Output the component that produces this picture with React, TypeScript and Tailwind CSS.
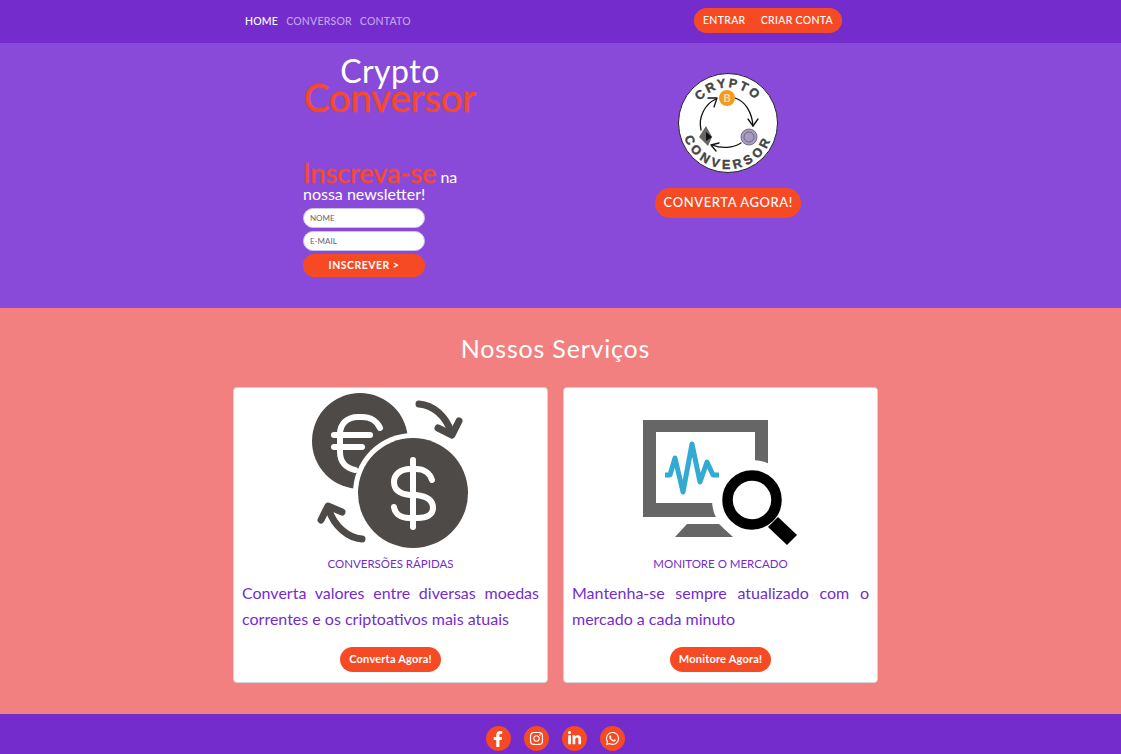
import { FaFacebookF, FaInstagram, FaLinkedinIn, FaWhatsapp } from 'react-icons/fa'

function LogoBadge() {
  return (
    <svg width="100" height="100" viewBox="0 0 100 100" className="block">
      <circle cx="50" cy="50" r="49.5" fill="#fff" stroke="#222" strokeWidth="1" />
      <defs>
        <path id="logoTop" d="M 14.5 50 A 35.5 35.5 0 0 1 85.5 50" />
        <path id="logoBottom" d="M 4 50 A 46 46 0 0 0 96 50" />
      </defs>
      <text fontFamily="'Liberation Sans', sans-serif" fontWeight="700" fontSize="12.5" fill="#444" stroke="#444" strokeWidth="0.4" letterSpacing="2.2" textAnchor="middle">
        <textPath href="#logoTop" startOffset="50%">CRYPTO</textPath>
      </text>
      <text fontFamily="'Liberation Sans', sans-serif" fontWeight="700" fontSize="12.5" fill="#444" stroke="#444" strokeWidth="0.4" letterSpacing="3.8" textAnchor="middle">
        <textPath href="#logoBottom" startOffset="50%">CONVERSOR</textPath>
      </text>
      <g fill="none" stroke="#111" strokeWidth="1.3" strokeLinecap="round" strokeLinejoin="round">
        <path d="M 57 25 C 67 28 74 39 75 53" />
        <path d="M 70 46 L 75 53 L 80 46" />
        <path d="M 63 70 C 55 75 44 76 34 72" />
        <path d="M 41 70 L 33 72 L 38 78" />
        <path d="M 23 57 C 20 44 27 31 38 26" />
        <path d="M 30 25 L 39 25 L 36 34" />
      </g>
      <circle cx="49" cy="25" r="8" fill="#f39a1f" />
      <text x="49" y="29" textAnchor="middle" fontFamily="'Liberation Sans', sans-serif" fontWeight="700" fontSize="10" fill="#f8dcae">B</text>
      <circle cx="71" cy="64" r="8" fill="#a79cc0" stroke="#77708c" strokeWidth="1" />
      <circle cx="71" cy="64" r="5" fill="none" stroke="#6f6788" strokeWidth="1" />
      <polygon points="28,53 34,64 30,73 21,64" fill="#666" />
      <polygon points="28,59 34,64 28,68" fill="#111" />
    </svg>
  )
}

function CoinsIcon() {
  return (
    <svg width="164" height="162" viewBox="1 0 164 162" className="block">
      <circle cx="52" cy="51" r="48" fill="#4d4a48" />
      <g fill="none" stroke="#fff" strokeWidth="6" strokeLinecap="round">
        <path d="M 72 38 C 69 31 62 27 54 27 H 50 C 39 27 32 34 32 44 V 62 C 32 72 38 78 47 80" />
        <path d="M 26 45 H 62" />
        <path d="M 26 57 H 54" />
      </g>
      <circle cx="105" cy="103" r="60" fill="#fff" />
      <circle cx="105" cy="103" r="55" fill="#4d4a48" />
      <g fill="none" stroke="#fff" strokeWidth="6" strokeLinecap="round">
        <path d="M 105 70 V 137" />
        <path d="M 124 90 C 122 83 116 79 108 79 H 102 C 92 79 86 85 86 92 C 86 100 92 104 102 105 H 108 C 118 106 125 110 125 118 C 125 125 118 128 110 128 H 101 C 93 128 87 124 86 117" />
      </g>
      <g fill="none" stroke="#4d4a48" strokeWidth="7" strokeLinecap="round" strokeLinejoin="round">
        <path d="M 111 14 C 125 15 138 26 143 42" />
        <path d="M 130 38 L 144 45 L 151 31" />
        <path d="M 54 149 C 40 148 26 136 21 120" />
        <path d="M 13 130 L 20 116 L 34 122" />
      </g>
    </svg>
  )
}

function MonitorIcon() {
  return (
    <svg width="160" height="130" viewBox="1 0 160 130" className="block">
      <path fillRule="evenodd" d="M 3 2 H 128 V 99 H 3 Z M 16 14 V 85 H 115 V 14 Z" fill="#666" />
      <polygon points="47,106 79,106 93,119 35,119" fill="#666" />
      <polyline
        points="25,57 30,57 35,40 43,74 52,26 60,64 67,44 73,57 79,57"
        fill="none"
        stroke="#33aad2"
        strokeWidth="5"
        strokeLinejoin="round"
      />
      <circle cx="112" cy="82" r="40" fill="#fff" />
      <circle cx="112" cy="82" r="24.5" fill="#fff" stroke="#000" strokeWidth="10.5" />
      <polygon points="138,99 157,117 147,127 128,109" fill="#000" />
    </svg>
  )
}

function ServiceCard({ icon, title, text, action }: { icon: React.ReactNode; title: string; text: string; action: string }) {
  return (
    <div className="flex h-[296px] flex-col items-center rounded border border-[#d4d4d4] bg-white px-2">
      <div className="flex h-[164px] items-end">{icon}</div>
      <h3 className="mt-[2px] text-[11.5px] leading-[20px] text-[#742dcc]">{title}</h3>
      <p className="mt-[6px] w-full text-justify text-[16px] leading-[26px] text-[#742dcc]">{text}</p>
      <button className="mt-[15px] h-[25px] rounded-full bg-[#f64a25] px-[9px] text-[11px] font-bold tracking-[0.2px] text-white">{action}</button>
    </div>
  )
}

const socials = [FaFacebookF, FaInstagram, FaLinkedinIn, FaWhatsapp]

export default function App() {
  return (
    <div className="min-h-screen font-['Lato',sans-serif]">
      {/* Nav */}
      <nav className="flex h-[43px] items-center justify-between bg-[#742dcc] pr-[279px] pl-[245px]">
        <div className="flex gap-2 text-[10.5px] font-medium tracking-[0.2px]">
          <span className="text-white">HOME</span>
          <span className="text-[#c5a4ec]">CONVERSOR</span>
          <span className="text-[#c5a4ec]">CONTATO</span>
        </div>
        <div className="mb-[2px] flex h-[25px] w-[148px] items-center justify-between rounded-full bg-[#f64a25] px-[9px] text-[10.5px] font-medium tracking-[0.3px] text-white">
          <span>ENTRAR</span>
          <span>CRIAR CONTA</span>
        </div>
      </nav>

      {/* Hero */}
      <section className="h-[265px] bg-[#8a4ad9] pr-[10px]">
        <div className="mx-auto grid w-[645px] grid-cols-2">
          <div className="pl-[70px]">
            <div className="flex w-[174px] flex-col items-center pt-[11px]">
              <span className="text-[32px] leading-[34px] tracking-[0.5px] text-white">Crypto</span>
              <span className="text-[38px] leading-[18px] text-[#f64a25] [-webkit-text-stroke:0.5px_#f64a25]">Conversor</span>
            </div>
            <div className="mt-[58px] w-[170px] text-[16px] leading-[17px] text-white">
              <span className="text-[27px] leading-[17px] text-[#f64a25] [-webkit-text-stroke:0.5px_#f64a25]">Inscreva-se</span> na nossa newsletter!
            </div>
            <div className="mt-[6px] flex w-[122px] flex-col gap-[3px]">
              <input placeholder="NOME" className="h-[20px] w-full rounded-full border border-[#c8c4e8] bg-white px-[6px] text-[8px] placeholder:text-[#666]" />
              <input placeholder="E-MAIL" className="h-[20px] w-full rounded-full border border-[#c8c4e8] bg-white px-[6px] text-[8px] placeholder:text-[#666]" />
              <button className="h-[23px] rounded-full bg-[#f64a25] text-[10.5px] font-bold tracking-[0.5px] text-white">INSCREVER &gt;</button>
            </div>
          </div>
          <div className="flex flex-col items-center pt-[30px] pl-[23px]">
            <LogoBadge />
            <button className="mt-[15px] h-[30px] w-[146px] rounded-full bg-[#f64a25] text-[13px] font-medium tracking-[0.6px] text-white">CONVERTA AGORA!</button>
          </div>
        </div>
      </section>

      {/* Services */}
      <section className="h-[406px] bg-[#f28080] pt-[24px] pr-[10px]">
        <h2 className="text-center text-[25px] leading-[32px] tracking-[0.8px] text-white">Nossos Serviços</h2>
        <div className="mx-auto mt-[23px] grid w-[645px] grid-cols-2 gap-[15px]">
          <ServiceCard
            icon={<CoinsIcon />}
            title="CONVERSÕES RÁPIDAS"
            text="Converta valores entre diversas moedas correntes e os criptoativos mais atuais"
            action="Converta Agora!"
          />
          <ServiceCard
            icon={<div className="mb-[4px]"><MonitorIcon /></div>}
            title="MONITORE O MERCADO"
            text="Mantenha-se sempre atualizado com o mercado a cada minuto"
            action="Monitore Agora!"
          />
        </div>
      </section>

      {/* Footer */}
      <footer className="flex h-[40px] items-start justify-center gap-[13px] bg-[#742dcc] pt-[12px] pr-[11px]">
        {socials.map((Icon, i) => (
          <div key={i} className="flex h-[25px] w-[25px] items-center justify-center rounded-full bg-[#f64a25] text-white">
            <Icon className={i === 0 ? 'text-[16px]' : 'text-[15px]'} />
          </div>
        ))}
      </footer>
    </div>
  )
}
